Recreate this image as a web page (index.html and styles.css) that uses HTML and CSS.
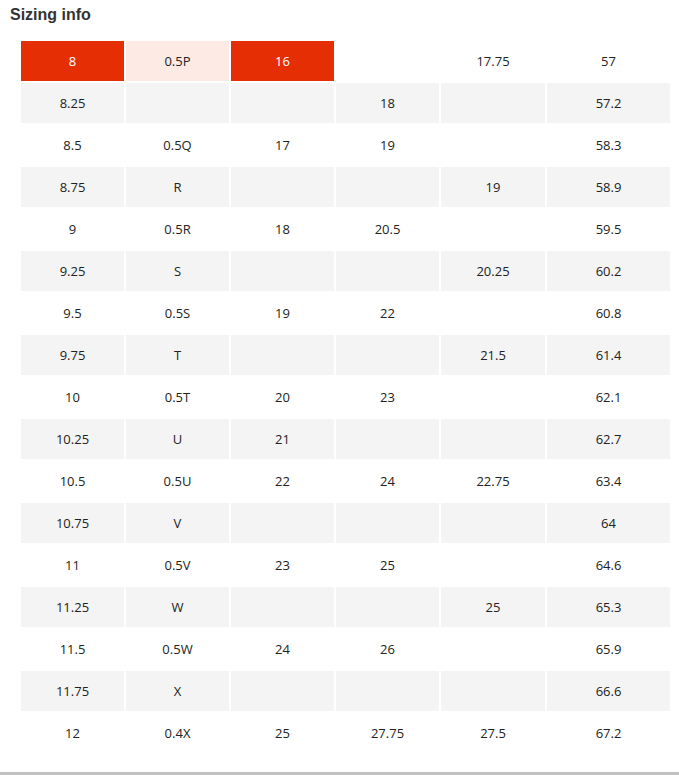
FILE: index.html
```html
<!DOCTYPE html>
<html>
<head>
<meta charset="utf-8">
<link rel="stylesheet" href="styles.css">
</head>
<body>
<div class="page">
  <h2 class="title">Sizing info</h2>
  <table class="sizes">
    <colgroup>
      <col class="c"><col class="c"><col class="c"><col class="c"><col class="c5"><col class="c6">
    </colgroup>
    <tbody>
      <tr><td class="hit">8</td><td class="soft">0.5P</td><td class="hit">16</td><td></td><td>17.75</td><td>57</td></tr>
      <tr><td>8.25</td><td></td><td></td><td>18</td><td></td><td>57.2</td></tr>
      <tr><td>8.5</td><td>0.5Q</td><td>17</td><td>19</td><td></td><td>58.3</td></tr>
      <tr><td>8.75</td><td>R</td><td></td><td></td><td>19</td><td>58.9</td></tr>
      <tr><td>9</td><td>0.5R</td><td>18</td><td>20.5</td><td></td><td>59.5</td></tr>
      <tr><td>9.25</td><td>S</td><td></td><td></td><td>20.25</td><td>60.2</td></tr>
      <tr><td>9.5</td><td>0.5S</td><td>19</td><td>22</td><td></td><td>60.8</td></tr>
      <tr><td>9.75</td><td>T</td><td></td><td></td><td>21.5</td><td>61.4</td></tr>
      <tr><td>10</td><td>0.5T</td><td>20</td><td>23</td><td></td><td>62.1</td></tr>
      <tr><td>10.25</td><td>U</td><td>21</td><td></td><td></td><td>62.7</td></tr>
      <tr><td>10.5</td><td>0.5U</td><td>22</td><td>24</td><td>22.75</td><td>63.4</td></tr>
      <tr><td>10.75</td><td>V</td><td></td><td></td><td></td><td>64</td></tr>
      <tr><td>11</td><td>0.5V</td><td>23</td><td>25</td><td></td><td>64.6</td></tr>
      <tr><td>11.25</td><td>W</td><td></td><td></td><td>25</td><td>65.3</td></tr>
      <tr><td>11.5</td><td>0.5W</td><td>24</td><td>26</td><td></td><td>65.9</td></tr>
      <tr><td>11.75</td><td>X</td><td></td><td></td><td></td><td>66.6</td></tr>
      <tr><td>12</td><td>0.4X</td><td>25</td><td>27.75</td><td>27.5</td><td>67.2</td></tr>
    </tbody>
  </table>
  <div class="bottom-rule"></div>
</div>
</body>
</html>
```
FILE: styles.css
```css
html, body {
  margin: 0;
  padding: 0;
  background: #ffffff;
}
.page {
  width: 679px;
  height: 775px;
  display: flex;
  flex-direction: column;
  overflow: hidden;
}
.title {
  margin: 0;
  padding: 5px 10px 0;
  font-family: "Liberation Sans", Arial, sans-serif;
  font-weight: bold;
  font-size: 16px;
  line-height: 20px;
  color: #333333;
}
.sizes {
  margin: 14px 0 0 19px;
  table-layout: fixed;
  width: 653px;
  border-collapse: separate;
  border-spacing: 2px;
  font-family: "Open Sans", sans-serif;
  font-size: 13px;
  color: #222222;
}
.c { width: 103px; }
.c5 { width: 104px; }
.c6 { width: 123px; }
.sizes td {
  height: 40px;
  padding: 0;
  text-align: center;
  vertical-align: middle;
  box-sizing: border-box;
}
.sizes tr:nth-child(even) td {
  background: #f4f4f4;
}
.sizes td.hit {
  background: #e62e04;
  color: #ffffff;
}
.sizes td.soft {
  background: #fdeae4;
}
.bottom-rule {
  margin-top: auto;
  height: 3px;
  background: #c2c2c2;
  flex-shrink: 0;
}
```
